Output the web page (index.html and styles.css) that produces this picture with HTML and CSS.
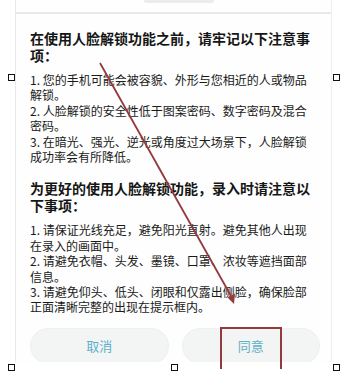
FILE: index.html
```html
<!DOCTYPE html>
<html lang="zh-CN">
<head>
    <meta charset="UTF-8">
    <meta name="viewport" content="width=device-width, initial-scale=1.0">
    <title>人脸解锁</title>
    <link rel="stylesheet" href="styles.css">
</head>
<body>
    <div class="page">
        <div class="screen">
            <div class="title-bar">
                <span class="title-blur"></span>
            </div>
            <div class="content">
                <h2 class="notice-title">在使用人脸解锁功能之前，请牢记以下注意事项：</h2>
                <div class="notice-list">
                    <p>1. 您的手机可能会被容貌、外形与您相近的人或物品解锁。</p>
                    <p>2. 人脸解锁的安全性低于图案密码、数字密码及混合密码。</p>
                    <p>3. 在暗光、强光、逆光或角度过大场景下，人脸解锁成功率会有所降低。</p>
                </div>
                <h2 class="notice-title second">为更好的使用人脸解锁功能，录入时请注意以下事项：</h2>
                <div class="notice-list">
                    <p>1. 请保证光线充足，避免阳光直射。避免其他人出现在录入的画面中。</p>
                    <p>2. 请避免衣帽、头发、墨镜、口罩、浓妆等遮挡面部信息。</p>
                    <p>3. 请避免仰头、低头、闭眼和仅露出侧脸，确保脸部正面清晰完整的出现在提示框内。</p>
                </div>
            </div>
            <div class="actions">
                <button class="btn">取消</button>
                <button class="btn">同意</button>
            </div>
        </div>

        <!-- annotations drawn over the screenshot -->
        <svg class="arrow" width="343" height="371" viewBox="0 0 343 371">
            <line x1="100" y1="63" x2="231" y2="296" stroke="#933a3e" stroke-width="1.8"/>
            <polygon points="234,304 227.5,297.5 235,293.5" fill="#933a3e"/>
        </svg>
        <div class="highlight-box"></div>

        <span class="handle h-ml"></span>
        <span class="handle h-mr"></span>
        <span class="handle h-bl"></span>
        <span class="handle h-bc"></span>
        <span class="handle h-br"></span>
    </div>
</body>
</html>
```

FILE: styles.css
```css
:root {
    --text-color: #1a1a1a;
    --button-text: #5eb1cb;
    --button-bg: #f3f4f4;
    --mark-color: #933a3e;
}

body {
    margin: 0;
    padding: 0;
    background-color: #fff;
    font-family: "Noto Sans CJK SC", "Noto Sans", sans-serif;
    color: var(--text-color);
}

.page {
    position: relative;
    width: 343px;
    height: 371px;
    overflow: hidden;
}

.screen {
    box-sizing: border-box;
    width: 317px;
    height: 362px;
    margin-left: 15px;
    background-color: #fdfefd;
    border-left: 1px solid #e2efe2;
    border-right: 1px solid #edf2ed;
    overflow: hidden;
}

.title-bar {
    height: 12px;
    border-bottom: 2px solid #e8e9e8;
    overflow: hidden;
}

/* bottom edge of the cut-off title, only a faint smudge is left */
.title-blur {
    display: block;
    width: 70px;
    height: 3px;
    margin-left: 128px;
    border-radius: 0 0 2px 2px;
    background-color: #ececec;
}

.content {
    padding: 16px 16px 0 14px;
}

.notice-title {
    margin: 0 0 8px;
    font-size: 14px;
    line-height: 17px;
    font-weight: 700;
    color: #161616;
}

.notice-title.second {
    margin-top: 16px;
}

.notice-list p {
    margin: 0;
    font-size: 12px;
    line-height: 15.4px;
}

.actions {
    display: flex;
    gap: 13px;
    padding: 13px 11px 0 14px;
}

.btn {
    flex: 1;
    height: 36px;
    border: 1px solid #eeefef;
    border-radius: 18px;
    background-color: var(--button-bg);
    color: var(--button-text);
    font-family: inherit;
    font-size: 13px;
    padding: 0;
}

.arrow {
    position: absolute;
    top: 0;
    left: 0;
}

.highlight-box {
    position: absolute;
    left: 220px;
    top: 327px;
    width: 58px;
    height: 40px;
    border: 2px solid var(--mark-color);
    border-bottom: none;
}

.handle {
    position: absolute;
    width: 5px;
    height: 5px;
    border: 1px solid #111;
    background-color: #fff;
}

.h-ml { left: 8px; top: 74px; }
.h-mr { left: 333px; top: 74px; }
.h-bl { left: 8px; top: 364px; }
.h-bc { left: 171px; top: 364px; }
.h-br { left: 333px; top: 364px; }
```
